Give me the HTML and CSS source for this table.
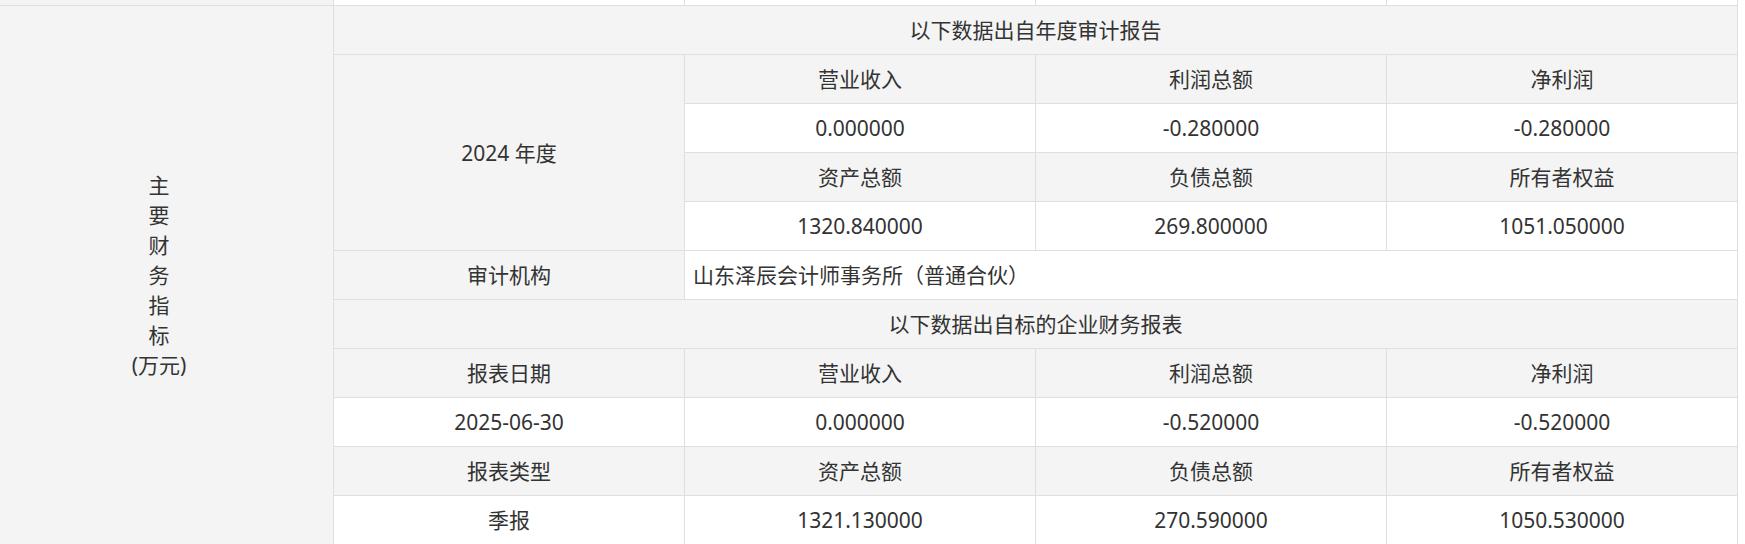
FILE: index.html
```html
<!DOCTYPE html>
<html lang="zh-CN">
<head>
<meta charset="utf-8">
<title>主要财务指标</title>
<link rel="stylesheet" href="styles.css">
</head>
<body>
<div class="viewport">
  <table class="fin">
    <colgroup>
      <col class="c-side">
      <col class="c-label">
      <col class="c-val">
      <col class="c-val">
      <col class="c-last">
    </colgroup>
    <tr>
      <td class="hd"></td><td></td><td></td><td></td><td></td>
    </tr>
    <tr>
      <td class="hd side" rowspan="11">主<br>要<br>财<br>务<br>指<br>标<br>(万元)</td>
      <td class="hd" colspan="4">以下数据出自年度审计报告</td>
    </tr>
    <tr>
      <td class="hd" rowspan="4">2024 年度</td>
      <td class="hd">营业收入</td>
      <td class="hd">利润总额</td>
      <td class="hd">净利润</td>
    </tr>
    <tr>
      <td>0.000000</td>
      <td>-0.280000</td>
      <td>-0.280000</td>
    </tr>
    <tr>
      <td class="hd">资产总额</td>
      <td class="hd">负债总额</td>
      <td class="hd">所有者权益</td>
    </tr>
    <tr>
      <td>1320.840000</td>
      <td>269.800000</td>
      <td>1051.050000</td>
    </tr>
    <tr>
      <td class="hd">审计机构</td>
      <td class="left" colspan="3">山东泽辰会计师事务所（普通合伙）</td>
    </tr>
    <tr>
      <td class="hd" colspan="4">以下数据出自标的企业财务报表</td>
    </tr>
    <tr>
      <td class="hd">报表日期</td>
      <td class="hd">营业收入</td>
      <td class="hd">利润总额</td>
      <td class="hd">净利润</td>
    </tr>
    <tr>
      <td>2025-06-30</td>
      <td>0.000000</td>
      <td>-0.520000</td>
      <td>-0.520000</td>
    </tr>
    <tr>
      <td class="hd">报表类型</td>
      <td class="hd">资产总额</td>
      <td class="hd">负债总额</td>
      <td class="hd">所有者权益</td>
    </tr>
    <tr>
      <td>季报</td>
      <td>1321.130000</td>
      <td>270.590000</td>
      <td>1050.530000</td>
    </tr>
  </table>
</div>
</body>
</html>
```

FILE: styles.css
```css
html, body {
  margin: 0;
  padding: 0;
  background: #ffffff;
  overflow: hidden;
}

body {
  font-family: "Noto Sans", "Noto Sans CJK SC", sans-serif;
  color: #333333;
}

.viewport {
  margin: -43.6px 7px 0 -16px;
}

.fin {
  width: 100%;
  border-collapse: collapse;
  table-layout: fixed;
  font-size: 21px;
}

.c-side { width: 349px; }
.c-label { width: 351px; }
.c-val { width: 351px; }

.fin tr {
  height: 48.95px;
}

.fin td {
  border: 1px solid #dfdfdf;
  background: #ffffff;
  text-align: center;
  vertical-align: middle;
  padding: 0 8px;
  line-height: 30px;
  white-space: nowrap;
}

.fin td.hd {
  background: #f4f4f4;
}

.fin td.left {
  text-align: left;
}

.fin td.side {
  line-height: 30px;
}
```
